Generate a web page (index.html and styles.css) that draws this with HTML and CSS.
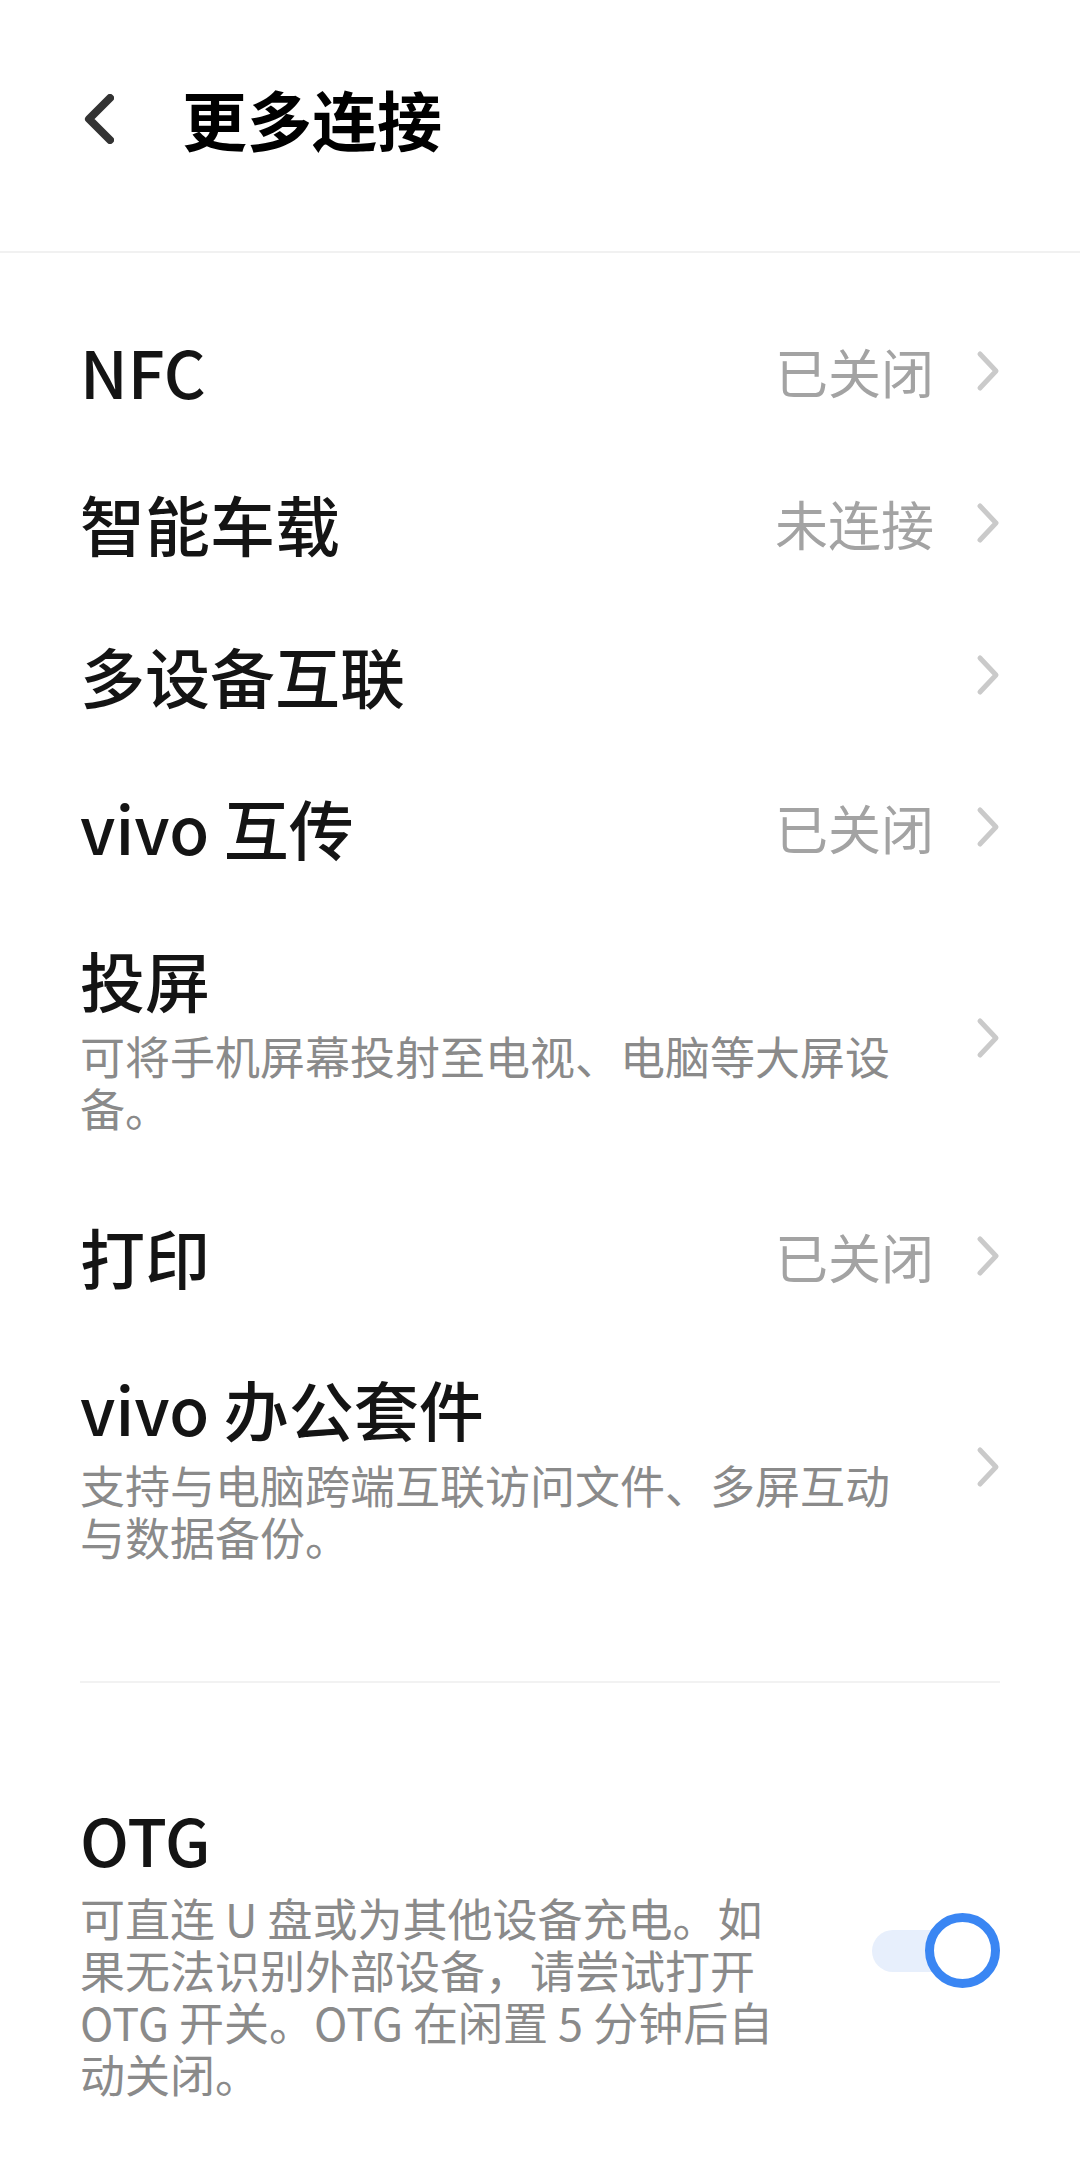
FILE: index.html
```html
<!DOCTYPE html>
<html lang="zh-CN">
<head>
  <meta charset="UTF-8">
  <title>更多连接</title>
  <link rel="stylesheet" href="styles.css">
</head>
<body>
  <header class="topbar">
    <svg class="back" width="30" height="50" viewBox="0 0 30 50">
      <path d="M26 4 L5 25 L26 46" fill="none" stroke="#333" stroke-width="8" stroke-linecap="round" stroke-linejoin="round"/>
    </svg>
    <h1 class="title">更多连接</h1>
  </header>

  <main class="list">
    <div class="row">
      <div class="label">NFC</div>
      <div class="value">已关闭</div>
      <svg class="arrow" width="24" height="42" viewBox="0 0 24 42"><path d="M4 4 L20 21 L4 38"/></svg>
    </div>
    <div class="row">
      <div class="label">智能车载</div>
      <div class="value">未连接</div>
      <svg class="arrow" width="24" height="42" viewBox="0 0 24 42"><path d="M4 4 L20 21 L4 38"/></svg>
    </div>
    <div class="row">
      <div class="label">多设备互联</div>
      <svg class="arrow" width="24" height="42" viewBox="0 0 24 42"><path d="M4 4 L20 21 L4 38"/></svg>
    </div>
    <div class="row">
      <div class="label">vivo 互传</div>
      <div class="value">已关闭</div>
      <svg class="arrow" width="24" height="42" viewBox="0 0 24 42"><path d="M4 4 L20 21 L4 38"/></svg>
    </div>
    <div class="row tall">
      <div class="text">
        <div class="label">投屏</div>
        <div class="desc">可将手机屏幕投射至电视、电脑等大屏设备。</div>
      </div>
      <svg class="arrow" width="24" height="42" viewBox="0 0 24 42"><path d="M4 4 L20 21 L4 38"/></svg>
    </div>
    <div class="row">
      <div class="label">打印</div>
      <div class="value">已关闭</div>
      <svg class="arrow" width="24" height="42" viewBox="0 0 24 42"><path d="M4 4 L20 21 L4 38"/></svg>
    </div>
    <div class="row tall">
      <div class="text">
        <div class="label">vivo 办公套件</div>
        <div class="desc">支持与电脑跨端互联访问文件、多屏互动与数据备份。</div>
      </div>
      <svg class="arrow" width="24" height="42" viewBox="0 0 24 42"><path d="M4 4 L20 21 L4 38"/></svg>
    </div>

    <div class="divider"></div>

    <div class="row otg">
      <div class="text">
        <div class="label">OTG</div>
        <div class="desc">可直连 U 盘或为其他设备充电。如果无法识别外部设备，请尝试打开 OTG 开关。OTG 在闲置 5 分钟后自动关闭。</div>
      </div>
      <div class="switch on"><span class="knob"></span></div>
    </div>
  </main>
</body>
</html>
```

FILE: styles.css
```css
body {
  margin: 0;
  background: #fff;
  color: #000;
  font-family: "Noto Sans CJK SC", "Noto Sans", sans-serif;
}

.topbar {
  height: 253px;
  display: flex;
  align-items: center;
  padding: 0 0 14px 84px;
  box-sizing: border-box;
  border-bottom: 2px solid #f1f1f1;
}
.back {
  display: block;
  margin-right: 68px;
}
.title {
  margin: 0;
  font-size: 65px;
  font-weight: 700;
  line-height: 1;
}

.list {
  padding: 42px 80px 0;
}

.row {
  display: flex;
  align-items: center;
  height: 152px;
}
.row.tall {
  height: auto;
  padding: 38px 0 46px;
}
.text {
  flex: 1;
}
.label {
  flex: 1;
  font-size: 65px;
  font-weight: 500;
  line-height: 76px;
  color: #141414;
}
.desc {
  width: 830px;
  margin-top: 13px;
  font-size: 45px;
  line-height: 52px;
  color: #8a8a8a;
}
.value {
  font-size: 53px;
  color: #a3a3a3;
  margin-right: 42px;
}
.arrow {
  display: block;
  flex: none;
}
.arrow path {
  fill: none;
  stroke: #cacaca;
  stroke-width: 5;
  stroke-linecap: round;
  stroke-linejoin: round;
}

.divider {
  height: 2px;
  background: #f2f2f2;
  margin: 72px 0 0;
}

.row.otg {
  height: auto;
  padding-top: 118px;
  align-items: center;
}
.otg .desc {
  width: 700px;
  margin-top: 15px;
}

.switch {
  position: relative;
  width: 128px;
  height: 42px;
  border-radius: 21px;
  background: #e7effc;
}
.knob {
  position: absolute;
  right: 0;
  top: -17px;
  width: 57px;
  height: 57px;
  border: 9px solid #3a86f3;
  border-radius: 50%;
  background: #fff;
}
```
